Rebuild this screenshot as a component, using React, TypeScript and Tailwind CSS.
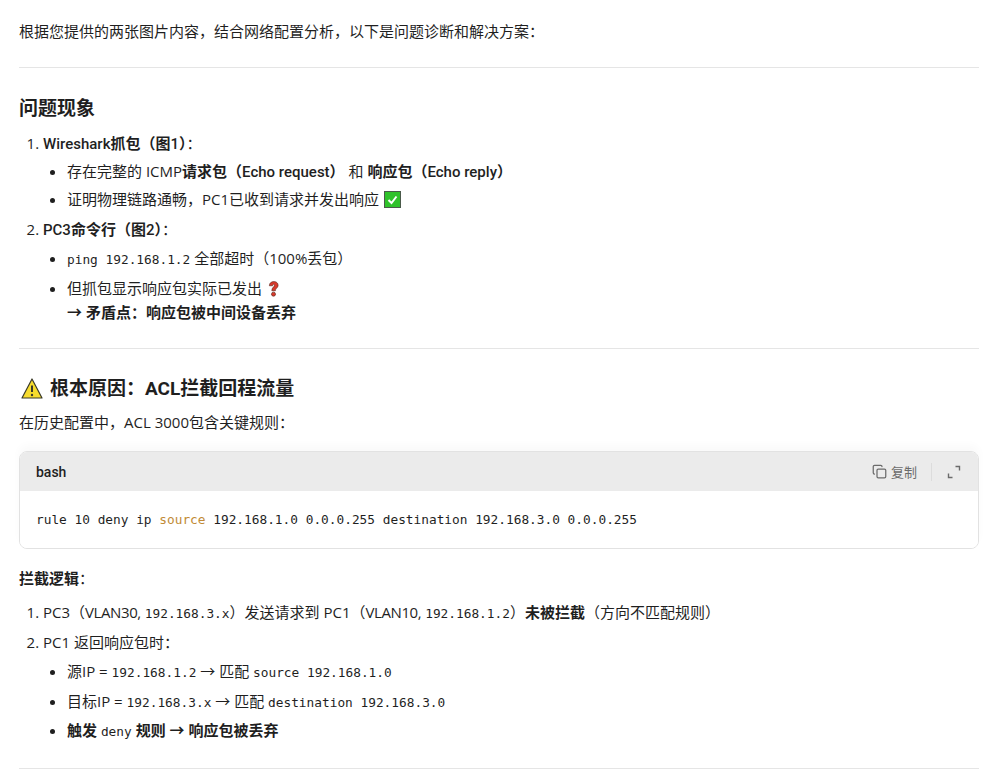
import { Copy } from 'lucide-react';
import type { ReactNode } from 'react';

const sans = 'font-["Open_Sans","Noto_Sans_CJK_SC",sans-serif]';

function Code({ children }: { children: ReactNode }) {
  return <code className='font-["DejaVu_Sans_Mono","Noto_Sans_CJK_SC",monospace] text-[12.8px] leading-none'>{children}</code>;
}

// latin inside bold runs is narrower than Open Sans bold
function Lat({ children }: { children: ReactNode }) {
  return <span className='font-["Roboto"] font-medium leading-none'>{children}</span>;
}

function Hr({ className }: { className: string }) {
  return <hr className={`border-0 border-t border-[#e5e5e5] ${className}`} />;
}

function CheckEmoji() {
  return (
    <svg viewBox="0 0 17 17" className="inline-block w-[17px] h-[17px] align-[-3px] ml-px">
      <rect x="0.5" y="0.5" width="16" height="16" fill="#2fc22a" stroke="#4a5a4a" />
      <path d="M4.5 9 L7.5 12 L12.5 5.5" fill="none" stroke="#fff" strokeWidth="2" />
    </svg>
  );
}

function QuestionEmoji() {
  return (
    <svg viewBox="0 0 12 18" className="inline-block w-[11px] h-[17px] align-[-3px] ml-[2px]">
      <path d="M1.5 6 C1.5 0 11 0 11 5.5 C11 8.5 8 8.5 8 11.5 L4.2 11.5 C4.2 7.5 7 7.5 7 5.5 C7 3.8 5 4 5 6 Z" fill="#d9392b" stroke="#5a2a20" strokeWidth="0.7" />
      <circle cx="6" cy="15.2" r="2.2" fill="#d9392b" stroke="#5a2a20" strokeWidth="0.7" />
    </svg>
  );
}

function WarningEmoji() {
  return (
    <svg viewBox="0 0 22 21" className="inline-block w-[22px] h-[21px] align-[-4px] ml-[2px] mr-[2px]">
      <path d="M11 1 L21 20 L1 20 Z" fill="#f7dc2e" stroke="#3a3a2a" strokeWidth="1.2" strokeLinejoin="round" />
      <path d="M11 7.5 L11 14" stroke="#3a3a2a" strokeWidth="2" />
      <circle cx="11" cy="17" r="1.2" fill="#3a3a2a" />
    </svg>
  );
}

export default function App() {
  return (
    <div className={`${sans} bg-white h-[777px] overflow-hidden pl-[19px] pr-[18px] pt-[19px] text-[15px] leading-6 text-[#1f1f1f]`}>
      <p>根据您提供的两张图片内容，结合网络配置分析，以下是问题诊断和解决方案：</p>

      <Hr className="mt-[24px]" />

      <h3 className="mt-[27px] text-[19px] leading-[26px] font-bold">问题现象</h3>

      <ol className="mt-[10px] list-decimal pl-6">
        <li>
          <strong><Lat>Wireshark</Lat>抓包（图<Lat>1</Lat>）</strong>：
          <ul className="list-disc pl-6 mt-[4px] space-y-[4px]">
            <li>存在完整的 ICMP<strong>请求包（<Lat>Echo request</Lat>）</strong> 和 <strong>响应包（<Lat>Echo reply</Lat>）</strong></li>
            <li>证明物理链路通畅，PC1已收到请求并发出响应 <CheckEmoji /></li>
          </ul>
        </li>
        <li className="mt-[6px]">
          <strong><Lat>PC3</Lat>命令行（图<Lat>2</Lat>）</strong>：
          <ul className="list-disc pl-6 mt-[5px] space-y-[6px]">
            <li><Code>ping 192.168.1.2</Code> 全部超时（100%丢包）</li>
            <li>
              但抓包显示响应包实际已发出 <QuestionEmoji />
              <br />
              <strong>→ 矛盾点：响应包被中间设备丢弃</strong>
            </li>
          </ul>
        </li>
      </ol>

      <Hr className="mt-[24px]" />

      <h3 className="mt-[26px] text-[19px] leading-[26px] font-bold"><WarningEmoji /> 根本原因：<span className='font-["Roboto"] leading-none'>ACL</span>拦截回程流量</h3>

      <p className="mt-[9px]">在历史配置中，ACL 3000包含关键规则：</p>

      <div className="mt-[17px] rounded-lg border border-[#e2e2e2] overflow-hidden shadow-[0_-6px_8px_#fafafa]">
        <div className="h-[39px] bg-[#ebebeb] flex items-center justify-between pl-4 pr-[17px]">
          <span className='font-["Roboto"] text-[14px] font-medium'>bash</span>
          <div className="flex items-center text-[#6b6b6b]">
            <Copy className="w-[15px] h-[15px] mr-1" strokeWidth={2} />
            <span className="text-[13px]">复制</span>
            <div className="w-px h-[18px] bg-[#dcdcdc] ml-[14px] mr-[15px]" />
            <svg viewBox="0 0 14 14" className="w-[14px] h-[14px]" fill="none" stroke="#6b6b6b" strokeWidth="1.4">
              <path d="M8.5 1.5 H12.5 V5.5" />
              <path d="M1.5 8.5 V12.5 H5.5" />
            </svg>
          </div>
        </div>
        <div className="h-[57px] pl-4 pt-[15px] leading-[24px] bg-white">
          <Code>rule 10 deny ip <span className="text-[#c18a35]">source</span> 192.168.1.0 0.0.0.255 destination 192.168.3.0 0.0.0.255</Code>
        </div>
      </div>

      <p className="mt-[17px]"><strong>拦截逻辑</strong>：</p>

      <ol className="mt-[10px] list-decimal pl-6">
        <li>PC3（<span className="tracking-[-0.4px]">VLAN30,</span> <Code>192.168.3.x</Code>）发送请求到 PC1（<span className="tracking-[-0.4px]">VLAN10,</span> <Code>192.168.1.2</Code>）<strong>未被拦截</strong>（方向不匹配规则）</li>
        <li className="mt-[6px]">
          PC1 返回响应包时：
          <ul className="list-disc pl-6 mt-[5px] space-y-[5.5px]">
            <li>源IP = <Code>192.168.1.2</Code> → 匹配 <Code>source 192.168.1.0</Code></li>
            <li>目标IP = <Code>192.168.3.x</Code> → 匹配 <Code>destination 192.168.3.0</Code></li>
            <li><strong>触发 <Code><span className="font-normal">deny</span></Code> 规则 → 响应包被丢弃</strong></li>
          </ul>
        </li>
      </ol>

      <Hr className="mt-[26px]" />
    </div>
  );
}
